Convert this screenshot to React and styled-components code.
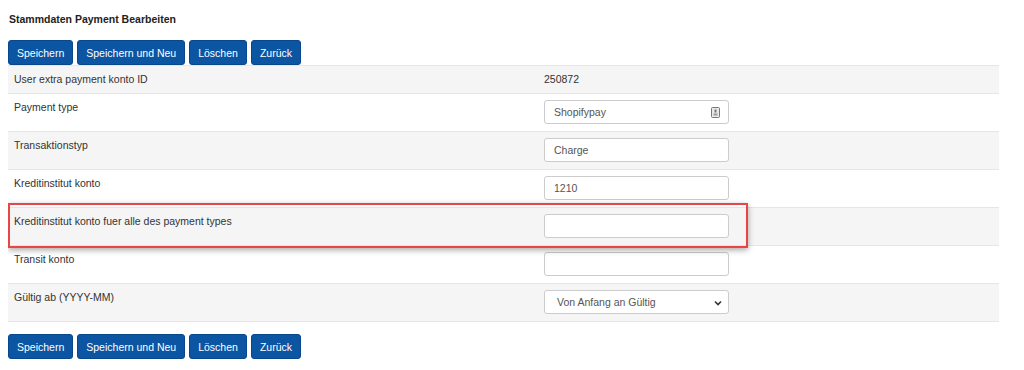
import React from 'react';
import styled, { createGlobalStyle } from 'styled-components';

const GlobalStyle = createGlobalStyle`
    body {
        margin: 8px;
        background: #fff;
        font-family: "Liberation Sans", Arial, sans-serif;
        color: #333;
    }
`

const Title = styled.h1`
    font-size: 10.5px;
    font-weight: bold;
    color: #222;
    margin: 5px 1px 15px;
`

const ButtonBar = styled.div`
    display: flex;
    gap: 4px;
    margin-top: ${props => props.top || 0}px;
`

const Button = styled.button`
    font-family: "Liberation Sans", Arial, sans-serif;
    font-size: 10.5px;
    height: 25px;
    padding: 0 8px;
    color: #fff;
    background: #0b55a3;
    border: 1px solid #08478b;
    border-radius: 3px;
`

const Table = styled.div`
    width: 991px;
    border-top: 1px solid #e6e6e6;
`

const Row = styled.div`
    position: relative;
    display: grid;
    grid-template-columns: 530px 1fr;
    min-height: ${props => props.short ? 27 : 37}px;
    background: ${props => props.grey ? '#f5f5f5' : '#fff'};
    border-bottom: 1px solid #e6e6e6;
`

const Highlight = styled.div`
    position: absolute;
    z-index: 2;
    left: 0;
    top: -5px;
    width: 740px;
    height: 45px;
    box-sizing: border-box;
    border: 2px solid #ec4444;
    box-shadow: 0 2px 6px rgba(0, 0, 0, 0.35);
    pointer-events: none;
`

const Label = styled.div`
    font-size: 10.5px;
    padding: 7px 6px;
    color: #333;
`

const Value = styled.div`
    font-size: 10.5px;
    padding: ${props => props.text ? '7px 6px' : '6px 6px'};
    color: #333;
`

const Field = styled.div`
    position: relative;
    display: flex;
    align-items: center;
    width: 185px;
    height: 24px;
    box-sizing: border-box;
    padding: 0 9px;
    font-size: 10.5px;
    color: #555;
    background: #fff;
    border: 1px solid #ccc;
    border-radius: 3px;
`

const FieldIcon = styled.svg`
    position: absolute;
    right: 8px;
    top: 6px;
`

const Chevron = styled.svg`
    position: absolute;
    right: 6px;
    top: 9px;
`

const SelectText = styled.span`
    padding-left: 3px;
`

function Buttons({ top }) {
    return (
        <ButtonBar top={top}>
            <Button>Speichern</Button>
            <Button>Speichern und Neu</Button>
            <Button>Löschen</Button>
            <Button>Zurück</Button>
        </ButtonBar>
    );
}

function App() {
    return (
        <>
            <GlobalStyle />
            <Title>Stammdaten Payment Bearbeiten</Title>
            <Buttons />
            <Table>
                <Row short grey>
                    <Label>User extra payment konto ID</Label>
                    <Value text>250872</Value>
                </Row>
                <Row>
                    <Label>Payment type</Label>
                    <Value>
                        <Field>
                            Shopifypay
                            <FieldIcon width="9" height="11" viewBox="0 0 9 11">
                                <rect x="0.5" y="0.5" width="8" height="10" rx="1" fill="#e8e8e8" stroke="#777" />
                                <rect x="3.5" y="2.5" width="2" height="3" fill="#777" />
                                <rect x="2.5" y="6.5" width="4" height="2" fill="#999" />
                            </FieldIcon>
                        </Field>
                    </Value>
                </Row>
                <Row grey>
                    <Label>Transaktionstyp</Label>
                    <Value><Field>Charge</Field></Value>
                </Row>
                <Row>
                    <Label>Kreditinstitut konto</Label>
                    <Value><Field>1210</Field></Value>
                </Row>
                <Row grey>
                    <Label>Kreditinstitut konto fuer alle des payment types</Label>
                    <Value><Field /></Value>
                    <Highlight />
                </Row>
                <Row>
                    <Label>Transit konto</Label>
                    <Value><Field /></Value>
                </Row>
                <Row grey>
                    <Label>Gültig ab (YYYY-MM)</Label>
                    <Value>
                        <Field>
                            <SelectText>Von Anfang an Gültig</SelectText>
                            <Chevron width="8" height="6" viewBox="0 0 8 6">
                                <path d="M1 1.5 L4 4.5 L7 1.5" fill="none" stroke="#333" strokeWidth="1.6" />
                            </Chevron>
                        </Field>
                    </Value>
                </Row>
            </Table>
            <Buttons top={12} />
        </>
    );
}

export default App;
